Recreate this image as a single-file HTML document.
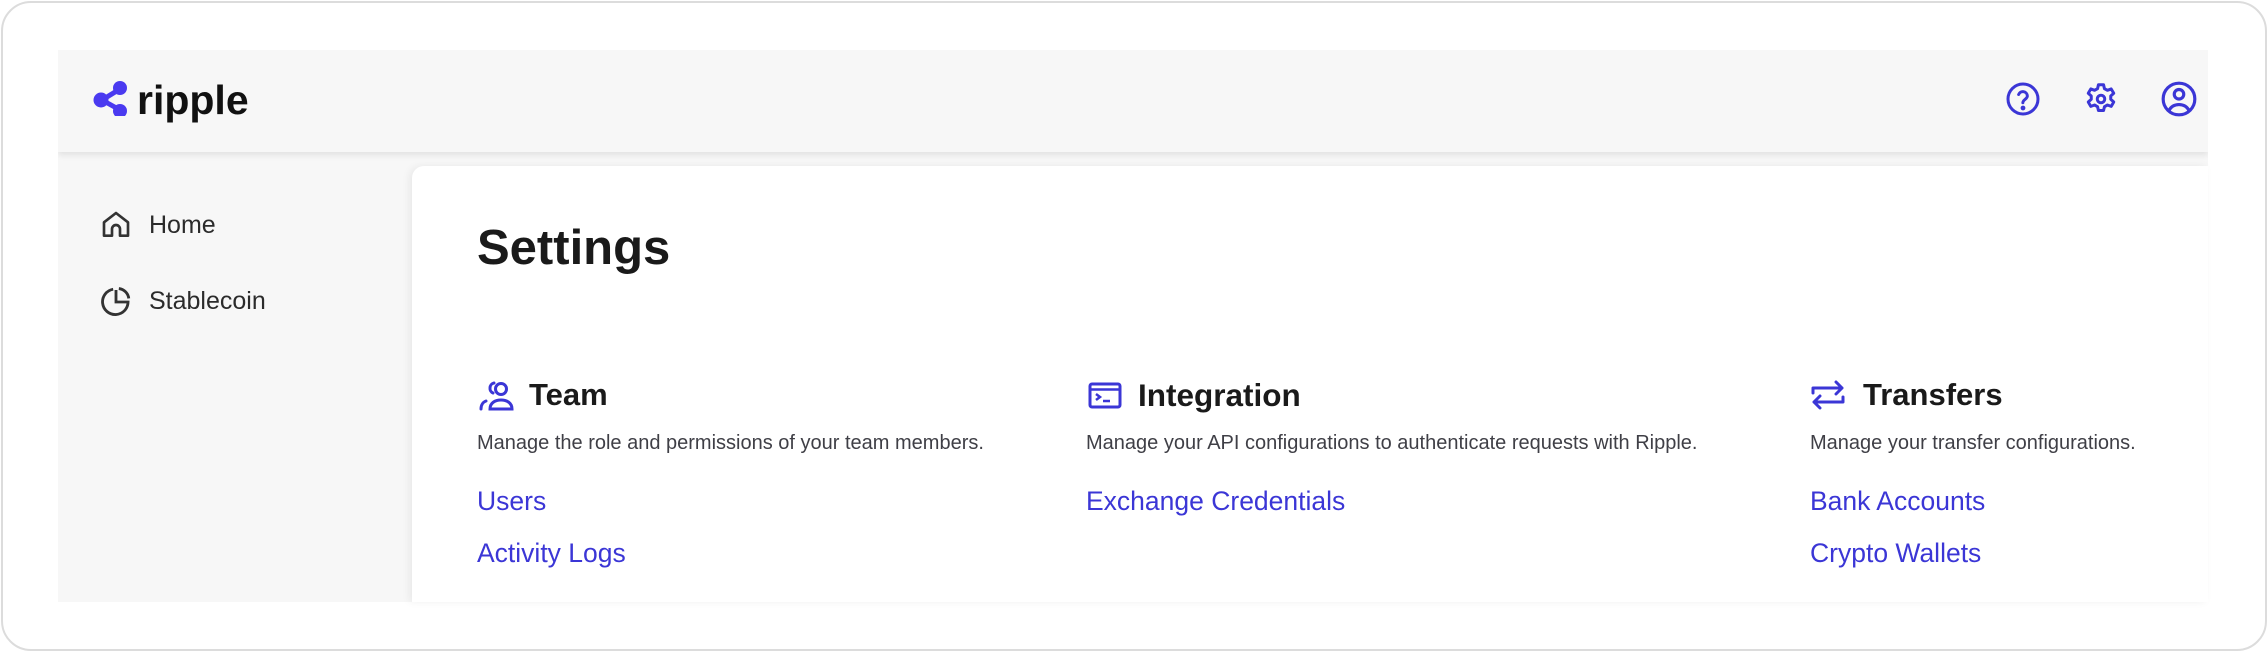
<!DOCTYPE html>
<html><head><meta charset="utf-8"><style>
*{margin:0;padding:0;box-sizing:border-box}
body{width:2268px;height:652px;background:#fff;font-family:"Liberation Sans",sans-serif;position:relative;overflow:hidden}
.frame{position:absolute;left:1px;top:1px;width:2266px;height:650px;border:2px solid #dcdcdc;border-radius:30px}
.app{position:absolute;left:58px;top:50px;width:2150px;height:552px;background:#f7f7f7;overflow:hidden}
.hdr{position:absolute;left:0;top:0;width:2150px;height:102px;background:#f7f7f7;box-shadow:0 3px 6px rgba(0,0,0,.09);z-index:2}
.logo{position:absolute;left:79px;top:27px;font-size:41px;font-weight:bold;color:#111}
.side{position:absolute;font-size:25px;color:#2b2b2b}
.card{position:absolute;left:412px;top:166px;width:1796px;height:436px;background:#fff;border-top-left-radius:12px;box-shadow:-3px 0 8px rgba(0,0,0,.06)}
.t{position:absolute;color:#1a1a1a;font-weight:bold}
.d{position:absolute;font-size:20px;color:#3f3f46}
.l{position:absolute;font-size:26.5px;color:#3b36d6}
svg{position:absolute}
</style></head><body>
<div class="frame"></div>
<div class="app">
<div class="hdr">
<svg style="left:32px;top:26px" width="40" height="40" viewBox="0 0 40 40"><path d="M12 24 L30 13 M12 24 L30 34" stroke="#4a3af0" stroke-width="5"/><circle cx="11" cy="24" r="7.5" fill="#4a3af0"/><circle cx="30" cy="12" r="7" fill="#4a3af0"/><circle cx="30" cy="35" r="7" fill="#4a3af0"/></svg>
<div class="logo">ripple</div>
<svg style="left:1947px;top:31px" width="36" height="36" viewBox="0 0 24 24" fill="none" stroke="#3b36d6" stroke-width="2" stroke-linecap="round"><circle cx="12" cy="12" r="10"/><path d="M9.1 9a3 3 0 0 1 5.8 1c0 2-3 2.5-3 4.5"/><circle cx="12" cy="18" r=".6" fill="#3b36d6"/></svg>
<svg style="left:2025px;top:31px" width="36" height="36" viewBox="0 0 24 24" fill="none" stroke="#3b36d6" stroke-width="2" stroke-linejoin="round"><path d="M10.3 2.5h3.4l.6 2.6 2 1.1 2.5-.9 1.7 2.9-2 1.8v2.2l2 1.8-1.7 2.9-2.5-.9-2 1.1-.6 2.6h-3.4l-.6-2.6-2-1.1-2.5.9-1.7-2.9 2-1.8v-2.2l-2-1.8 1.7-2.9 2.5.9 2-1.1z"/><circle cx="12" cy="12" r="2.5"/></svg>
<svg style="left:2102px;top:30px" width="38" height="38" viewBox="0 0 24 24" fill="none" stroke="#3b36d6" stroke-width="2"><circle cx="12" cy="12" r="10"/><circle cx="12" cy="9" r="3"/><path d="M5.5 19.5c1.5-3 4-4 6.5-4s5 1 6.5 4"/></svg>
</div>
<svg style="left:41px;top:159px" width="34" height="32" viewBox="0 0 24 24" fill="none" stroke="#333" stroke-width="2" stroke-linejoin="round"><path d="M3 20V10l9-7 9 7v10h-6v-5a3 3 0 0 0-6 0v5z"/></svg>
<div class="side" style="left:91px;top:161px">Home</div>
<svg style="left:41px;top:235px" width="34" height="34" viewBox="0 0 24 24" fill="none" stroke="#333" stroke-width="2"><path d="M10 3a9 9 0 1 0 10.5 9H12V3.5"/><path d="M14 2.5a8 8 0 0 1 7 7"/></svg>
<div class="side" style="left:91px;top:237px">Stablecoin</div>
</div>
<div class="card"></div>
<div class="t" style="left:477px;top:220px;font-size:49px">Settings</div>

<svg style="left:479px;top:381px" width="36" height="30" viewBox="0 0 36 30" fill="none" stroke="#3b36d6" stroke-width="3" stroke-linecap="round"><circle cx="22" cy="8" r="5.5"/><path d="M11 7a5 5 0 0 1 4-5M11 7a5 5 0 0 0 3 5"/><path d="M11 28c0-6 5-9 11-9s11 3 11 9z"/><path d="M2 28c0-4 2-7 5-8"/></svg>
<div class="t" style="left:529px;top:377px;font-size:31px">Team</div>
<div class="d" style="left:477px;top:432px">Manage the role and permissions of your team members.</div>
<div class="l" style="left:477px;top:486px">Users</div>
<div class="l" style="left:477px;top:538px">Activity Logs</div>

<svg style="left:1088px;top:382px" width="34" height="27" viewBox="0 0 34 27" fill="none" stroke="#3b36d6" stroke-width="3"><rect x="2" y="2" width="30" height="23" rx="2"/><path d="M2 7.5h30" stroke-width="2.5"/><path d="M8 12l4 3-4 3M15 19h7" stroke-width="2.5"/></svg>
<div class="t" style="left:1138px;top:377px;font-size:31.5px">Integration</div>
<div class="d" style="left:1086px;top:432px">Manage your API configurations to authenticate requests with Ripple.</div>
<div class="l" style="left:1086px;top:486px">Exchange Credentials</div>

<svg style="left:1810px;top:380px" width="36" height="30" viewBox="0 0 36 30" fill="none" stroke="#3b36d6" stroke-width="3" stroke-linecap="round" stroke-linejoin="round"><path d="M3 13V8h29M26 2l6 6-6 6"/><path d="M33 17v5H4M10 16l-6 6 6 6"/></svg>
<div class="t" style="left:1863px;top:377px;font-size:31px">Transfers</div>
<div class="d" style="left:1810px;top:432px">Manage your transfer configurations.</div>
<div class="l" style="left:1810px;top:486px">Bank Accounts</div>
<div class="l" style="left:1810px;top:538px">Crypto Wallets</div>
</body></html>
